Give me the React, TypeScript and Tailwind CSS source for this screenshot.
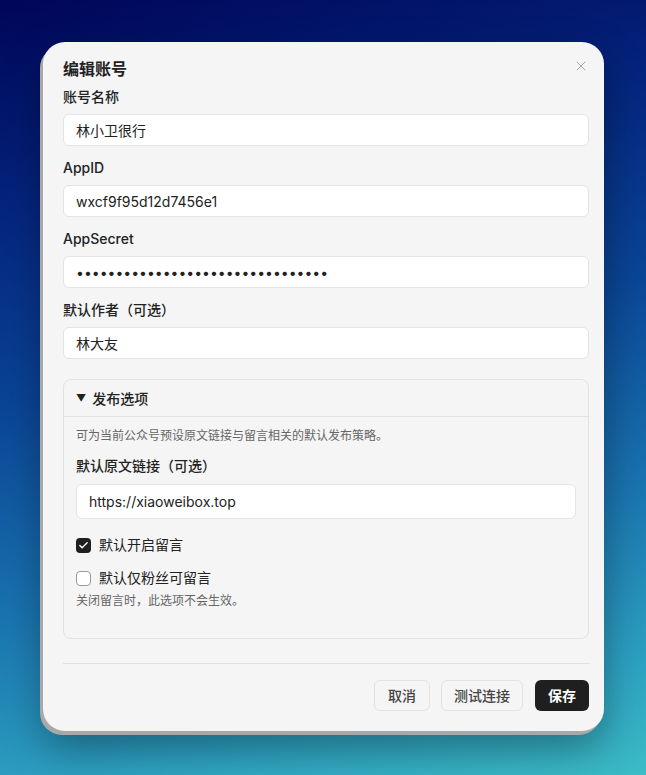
import { Check, X } from 'lucide-react';

const font = { fontFamily: 'Inter, "Noto Sans CJK SC", sans-serif' };

function Field({ label, value, secret }: { label: string; value: string; secret?: boolean }) {
  return (
    <div className="flex flex-col gap-[7px]">
      <label className="text-[14px] leading-[20px] font-medium text-[#222]">{label}</label>
      <input
        readOnly
        type={secret ? 'password' : 'text'}
        value={value}
        className="h-[32px] w-full rounded-[6px] border border-[#e4e4e4] bg-white px-3 text-[14px] text-[#222] outline-none"
        style={font}
      />
    </div>
  );
}

export default function App() {
  return (
    <div
      className="h-[775px] w-full overflow-hidden bg-[linear-gradient(168deg,#000658_0%,#04237c_22%,#0a4596_45%,#1a74b0_68%,#2ea3c2_88%,#3bbcc6_100%)] pt-[42px] pl-[43px]"
      style={font}
    >
      <div className="relative w-[561px] rounded-[22px] bg-[#f5f5f5] pl-5 pr-[15px] pt-[17px] pb-5 shadow-[-3px_4px_0_#a8a8a8,0_18px_40px_rgba(0,0,0,0.35)]">
        <button className="absolute right-[15px] top-[16px] text-[#a0a0a0]">
          <X size={16} strokeWidth={1.4} />
        </button>
        <h2 className="text-[16px] leading-[20px] font-semibold text-[#222]">编辑账号</h2>

        <div className="mt-2 flex flex-col gap-3">
          <Field label="账号名称" value="林小卫很行" />
          <Field label="AppID" value="wxcf9f95d12d7456e1" />
          <Field label="AppSecret" value="wxsecret0123456789abcdef01234567" secret />
          <Field label="默认作者（可选）" value="林大友" />
        </div>

        <div className="mt-5 rounded-[8px] border border-[#e2e2e2]">
          <div className="flex h-[37px] items-center gap-1.5 border-b border-[#e2e2e2] px-3 text-[14px] font-medium text-[#222]">
            <span className="text-[10px]">▼</span>
            <span>发布选项</span>
          </div>
          <div className="px-3 pt-[11px] pb-[29px]">
            <p className="text-[12px] leading-[16px] text-[#666]">可为当前公众号预设原文链接与留言相关的默认发布策略。</p>
            <label className="mt-3 block text-[14px] leading-[20px] font-medium text-[#222]">默认原文链接（可选）</label>
            <input
              readOnly
              value="https://xiaoweibox.top"
              className="mt-2 h-[35px] w-full rounded-[6px] border border-[#e4e4e4] bg-white px-3 text-[14px] text-[#222] outline-none"
              style={font}
            />
            <div className="mt-[16px] flex items-center gap-2 text-[14px] leading-[20px] text-[#222]">
              <span className="flex h-[15px] w-[15px] items-center justify-center rounded-[4px] bg-[#1f1f1f] text-white">
                <Check size={11} strokeWidth={3} />
              </span>
              默认开启留言
            </div>
            <div className="mt-[13px] flex items-center gap-2 text-[14px] leading-[20px] text-[#222]">
              <span className="h-[15px] w-[15px] rounded-[4px] border border-[#9a9a9a] bg-white" />
              默认仅粉丝可留言
            </div>
            <p className="mt-[5px] text-[12px] leading-[16px] text-[#666]">关闭留言时，此选项不会生效。</p>
          </div>
        </div>

        <div className="mt-[24px] border-t border-[#e0e0e0]" />

        <div className="mt-4 flex justify-end">
          <button className="h-[31px] rounded-[6px] border border-[#e2e2e2] px-[13px] text-[14px] font-medium text-[#444]">取消</button>
          <button className="ml-[11px] h-[31px] rounded-[6px] border border-[#e2e2e2] px-3 text-[14px] font-medium text-[#444]">测试连接</button>
          <button className="ml-3 h-[31px] rounded-[6px] bg-[#1f1f1f] px-[13px] text-[14px] font-semibold text-white">保存</button>
        </div>
      </div>
    </div>
  );
}
